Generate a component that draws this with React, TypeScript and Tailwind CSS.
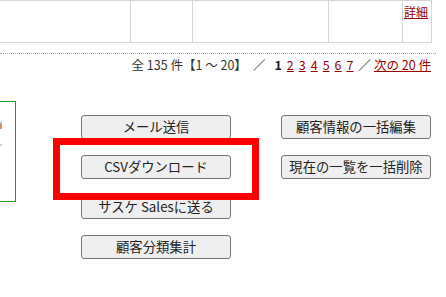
import * as React from "react";

const pages = ["2", "3", "4", "5", "6", "7"];

function ActionButton({ label }: { label: string }) {
  return (
    <button
      type="button"
      className="h-[24px] w-[150px] rounded-[3px] border border-[#767676] bg-[#efefef] text-[13.33px] leading-none text-[#222]"
    >
      {label}
    </button>
  );
}

export default function App() {
  return (
    <div className="relative h-[297px] w-[446px] overflow-hidden bg-white font-['Noto_Sans_CJK_JP','Noto_Sans',sans-serif] text-[#333]">
      {/* result table (last row) */}
      <div className="flex h-[43px] w-[432px] border-y border-[#d6d6d6]">
        <div className="w-[131px] border-r border-[#d6d6d6]" />
        <div className="w-[62px] border-r border-[#d6d6d6]" />
        <div className="w-[136px] border-r border-[#d6d6d6]" />
        <div className="w-[74px] border-r border-[#d6d6d6]" />
        <div className="w-[29px] border-r border-[#d6d6d6] pl-[1px] pt-[3px] text-[12px] leading-[16px]">
          <a href="#" className="text-[#990000] underline">
            詳細
          </a>
        </div>
      </div>

      <div className="mt-[10px] w-[436px] border-t border-dotted border-[#a8a878]" />

      {/* pager */}
      <div className="mt-[2px] flex w-[431px] justify-end whitespace-pre text-[12.5px] leading-[18px]">
        <span>全 135 件【1 ～ 20】</span>
        <span className="ml-[6px]">／</span>
        <b className="ml-[9px] mr-[5px] text-[#222]">1</b>
        {pages.map((p) => (
          <a key={p} href="#" className="mr-[5px] text-[#990000] underline">
            {p}
          </a>
        ))}
        <span>／</span>
        <a href="#" className="ml-[3px] text-[#990000] underline">
          次の 20 件
        </a>
      </div>

      {/* actions */}
      <div className="mt-[27px] flex">
        <div className="relative h-[101px] w-[16px] border-y border-r border-[#229922]">
          <div className="absolute left-0 top-[22px] h-[5px] w-[2px] bg-[#e0905a]" />
          <div className="absolute left-0 top-[20px] h-[2px] w-[2px] bg-[#9cc4ec]" />
          <div className="absolute left-0 top-[42px] h-[2px] w-[2px] bg-[#b8d4f0]" />
        </div>
        <div className="ml-[65px] mt-[14px] flex gap-[50px]">
          <div className="flex flex-col gap-[16px]">
            <ActionButton label="メール送信" />
            <ActionButton label="CSVダウンロード" />
            <ActionButton label="サスケ Salesに送る" />
            <ActionButton label="顧客分類集計" />
          </div>
          <div className="flex flex-col gap-[16px]">
            <ActionButton label="顧客情報の一括編集" />
            <ActionButton label="現在の一覧を一括削除" />
          </div>
        </div>
      </div>

      {/* highlight annotation */}
      <div className="absolute left-[53px] top-[138px] h-[62px] w-[206px] border-[7px] border-[#ff0000]" />
    </div>
  );
}
